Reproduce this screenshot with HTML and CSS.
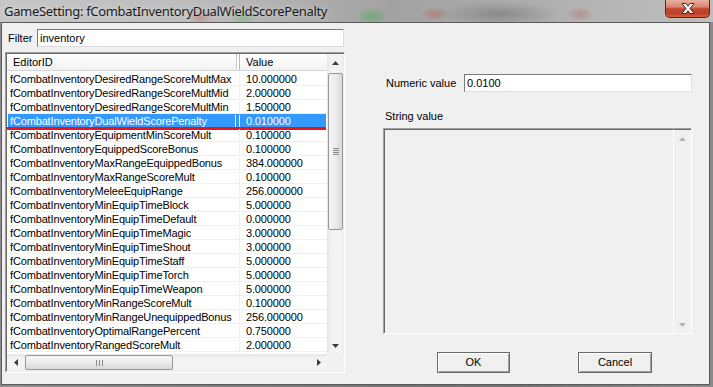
FILE: index.html
```html
<!DOCTYPE html>
<html>
<head>
<meta charset="utf-8">
<link rel="stylesheet" href="styles.css">
</head>
<body>
<div class="window">
  <div class="titlebar">
    <span class="title">GameSetting: fCombatInventoryDualWieldScorePenalty</span>
    <div class="close">
      <svg width="14" height="11" viewBox="0 0 14 11"><path d="M1 0.5 H4.8 L7 3.3 L9.2 0.5 H13 L9 5.5 L13 10.5 H9.2 L7 7.7 L4.8 10.5 H1 L5 5.5 Z" fill="#fff" stroke="#3a2a2a" stroke-width="1" stroke-linejoin="round"/></svg>
    </div>
  </div>
  <div class="frame">
    <div class="client">
      <div class="left-col">
        <div class="filter-row">
          <span class="lbl filter-lbl">Filter</span>
          <div class="textbox filter-box">inventory</div>
        </div>
        <div class="listview">
          <div class="lv-top">
            <div class="lv-content">
              <div class="lv-header">
                <div class="hcell hcell-id">EditorID</div>
                <div class="hcell hcell-val">Value</div>
              </div>
              <div class="lv-rows">
                <div class="row"><span class="c1">fCombatInventoryDesiredRangeScoreMultMax</span><span class="c2">10.000000</span></div>
                <div class="row"><span class="c1">fCombatInventoryDesiredRangeScoreMultMid</span><span class="c2">2.000000</span></div>
                <div class="row"><span class="c1">fCombatInventoryDesiredRangeScoreMultMin</span><span class="c2">1.500000</span></div>
                <div class="row selected"><span class="c1">fCombatInventoryDualWieldScorePenalty</span><span class="c2">0.010000</span><span class="redline"></span></div>
                <div class="row"><span class="c1">fCombatInventoryEquipmentMinScoreMult</span><span class="c2">0.100000</span></div>
                <div class="row"><span class="c1">fCombatInventoryEquippedScoreBonus</span><span class="c2">0.100000</span></div>
                <div class="row"><span class="c1">fCombatInventoryMaxRangeEquippedBonus</span><span class="c2">384.000000</span></div>
                <div class="row"><span class="c1">fCombatInventoryMaxRangeScoreMult</span><span class="c2">0.100000</span></div>
                <div class="row"><span class="c1">fCombatInventoryMeleeEquipRange</span><span class="c2">256.000000</span></div>
                <div class="row"><span class="c1">fCombatInventoryMinEquipTimeBlock</span><span class="c2">5.000000</span></div>
                <div class="row"><span class="c1">fCombatInventoryMinEquipTimeDefault</span><span class="c2">0.000000</span></div>
                <div class="row"><span class="c1">fCombatInventoryMinEquipTimeMagic</span><span class="c2">3.000000</span></div>
                <div class="row"><span class="c1">fCombatInventoryMinEquipTimeShout</span><span class="c2">3.000000</span></div>
                <div class="row"><span class="c1">fCombatInventoryMinEquipTimeStaff</span><span class="c2">5.000000</span></div>
                <div class="row"><span class="c1">fCombatInventoryMinEquipTimeTorch</span><span class="c2">5.000000</span></div>
                <div class="row"><span class="c1">fCombatInventoryMinEquipTimeWeapon</span><span class="c2">5.000000</span></div>
                <div class="row"><span class="c1">fCombatInventoryMinRangeScoreMult</span><span class="c2">0.100000</span></div>
                <div class="row"><span class="c1">fCombatInventoryMinRangeUnequippedBonus</span><span class="c2">256.000000</span></div>
                <div class="row"><span class="c1">fCombatInventoryOptimalRangePercent</span><span class="c2">0.750000</span></div>
                <div class="row"><span class="c1">fCombatInventoryRangedScoreMult</span><span class="c2">2.000000</span></div>
              </div>
            </div>
            <div class="vscroll">
              <div class="sb-btn"><svg width="7" height="4" viewBox="0 0 7 4"><path d="M0 4 L3.5 0 L7 4 Z" fill="#3c3c3c"/></svg></div>
              <div class="vtrack">
                <div class="vthumb">
                  <svg width="6" height="7" viewBox="0 0 6 7"><path d="M0 0.5 H6 M0 2.5 H6 M0 4.5 H6 M0 6.5 H6" stroke="#8a8a8a" stroke-width="1"/></svg>
                </div>
              </div>
              <div class="sb-btn"><svg width="7" height="4" viewBox="0 0 7 4"><path d="M0 0 L3.5 4 L7 0 Z" fill="#3c3c3c"/></svg></div>
            </div>
          </div>
          <div class="lv-bottom">
            <div class="hscroll">
              <div class="sb-hbtn"><svg width="4" height="7" viewBox="0 0 4 7"><path d="M4 0 L0 3.5 L4 7 Z" fill="#3c3c3c"/></svg></div>
              <div class="htrack">
                <div class="hthumb">
                  <svg width="7" height="6" viewBox="0 0 7 6"><path d="M0.5 0 V6 M3.5 0 V6 M6.5 0 V6" stroke="#8a8a8a" stroke-width="1"/></svg>
                </div>
              </div>
              <div class="sb-hbtn"><svg width="4" height="7" viewBox="0 0 4 7"><path d="M0 0 L4 3.5 L0 7 Z" fill="#3c3c3c"/></svg></div>
            </div>
            <div class="corner"></div>
          </div>
        </div>
      </div>
      <div class="right-col">
        <div class="num-row">
          <span class="lbl num-lbl">Numeric value</span>
          <div class="textbox num-box">0.0100</div>
        </div>
        <div class="lbl str-lbl">String value</div>
        <div class="memo">
          <div class="memo-body"></div>
          <div class="memo-scroll">
            <div class="sb-btn"><svg width="7" height="4" viewBox="0 0 7 4"><path d="M0 4 L3.5 0 L7 4 Z" fill="#b4b4b4"/></svg></div>
            <div class="memo-track"></div>
            <div class="sb-btn"><svg width="7" height="4" viewBox="0 0 7 4"><path d="M0 0 L3.5 4 L7 0 Z" fill="#b4b4b4"/></svg></div>
          </div>
        </div>
        <div class="btn-row">
          <div class="btn btn-ok">OK</div>
          <div class="btn btn-cancel">Cancel</div>
        </div>
      </div>
    </div>
  </div>
</div>
</body>
</html>
```

FILE: styles.css
```css
html, body {
  margin: 0;
  padding: 0;
}
body {
  width: 713px;
  height: 387px;
  overflow: hidden;
  background: #7d7d7d;
  font-family: "Liberation Sans", Arial, sans-serif;
  font-size: 11px;
  color: #000;
}
.window {
  display: flex;
  flex-direction: column;
  width: 713px;
  height: 387px;
  background: linear-gradient(90deg, #8c8c8c 0%, #7a7a7a 40%, #6f6f6f 70%, #8a8a8a 100%);
}
.titlebar {
  height: 22px;
  flex: none;
  display: flex;
  justify-content: space-between;
  align-items: flex-start;
  padding-left: 4px;
  background:
    radial-gradient(ellipse 14px 7px at 200px 17px, rgba(190, 60, 60, 0.35), transparent),
    radial-gradient(ellipse 14px 7px at 244px 17px, rgba(60, 170, 70, 0.35), transparent),
    radial-gradient(ellipse 16px 8px at 372px 16px, rgba(60, 170, 70, 0.5), transparent),
    radial-gradient(ellipse 14px 7px at 435px 14px, rgba(190, 60, 60, 0.35), transparent),
    radial-gradient(ellipse 14px 7px at 580px 14px, rgba(190, 60, 60, 0.3), transparent),
    radial-gradient(ellipse 60px 12px at 500px 14px, rgba(80, 80, 80, 0.35), transparent),
    linear-gradient(90deg, #c6c6c6 0%, #bdbdbd 25%, #b0b0b0 40%, #a2a2a2 55%, #a9a9a9 70%, #b6b6b6 85%, #bebebe 100%);
}
.title {
  font-family: "Noto Sans", "Open Sans", sans-serif;
  font-size: 13px;
  letter-spacing: -0.32px;
  line-height: 22px;
  color: #1c1c1c;
  text-shadow: 0 0 6px rgba(255, 255, 255, 0.7);
  white-space: nowrap;
}
.close {
  width: 45px;
  height: 18px;
  margin-right: 3px;
  box-sizing: border-box;
  border: 1px solid #5b2519;
  border-top: none;
  border-radius: 0 0 5px 5px;
  background: linear-gradient(180deg, #e9b0a0 0%, #d98a74 40%, #c4452c 52%, #c0402a 80%, #d2603f 100%);
  display: flex;
  align-items: center;
  justify-content: center;
}
.close svg {
  display: block;
}
.frame {
  flex: 1;
  display: flex;
  padding: 0 3px 2px 1px;
}
.client {
  flex: 1;
  display: flex;
  background: #f0f0f0;
  border: 1px solid #5a5a5a;
}
.lbl {
  white-space: nowrap;
}
.textbox {
  box-sizing: border-box;
  height: 18px;
  background: #fff;
  border: 1px solid;
  border-color: #7a7a7a #dcdcdc #dcdcdc #7a7a7a;
  padding: 2px 0 0 2px;
  line-height: 13px;
}
/* left column */
.left-col {
  width: 340px;
  margin-left: 3px;
  display: flex;
  flex-direction: column;
}
.filter-row {
  display: flex;
  align-items: center;
  margin-top: 6px;
  height: 18px;
}
.filter-lbl {
  width: 29px;
  padding-left: 3px;
}
.filter-box {
  flex: 1;
  margin-right: 1px;
}
.listview {
  margin-top: 5px;
  height: 321px;
  box-sizing: border-box;
  border: 1px solid;
  border-color: #a0a0a0 #ffffff #ffffff #a0a0a0;
  display: flex;
  flex-direction: column;
}
.lv-top {
  display: flex;
  height: 300px;
  border-top: 1px solid #696969;
  border-left: 1px solid #696969;
  background: #fff;
}
.lv-content {
  flex: 1;
  display: flex;
  flex-direction: column;
  overflow: hidden;
}
.lv-header {
  display: flex;
  height: 17px;
  flex: none;
  box-sizing: border-box;
  border-bottom: 1px solid #d5d5d5;
  background: linear-gradient(180deg, #ffffff 0%, #f7f7f7 60%, #f1f1f1 100%);
}
.hcell {
  box-sizing: border-box;
  padding: 2px 0 0 6px;
  line-height: 13px;
}
.hcell-id {
  width: 233px;
  border-right: 1px solid #b8b8b8;
  box-shadow: inset -2px 0 0 #fff, inset -3px 0 0 #c8c8c8;
}
.hcell-val {
  flex: 1;
}
.lv-rows {
  padding-top: 1px;
  flex: 1;
}
.row {
  position: relative;
  display: flex;
  height: 14px;
  box-sizing: border-box;
  border-bottom: 1px solid #f0f0f0;
  line-height: 13px;
  padding-top: 1px;
  white-space: nowrap;
}
.c1 {
  width: 233px;
  box-sizing: border-box;
  padding-left: 3px;
  border-right: 1px solid #f0f0f0;
  letter-spacing: -0.15px;
}
.c2 {
  flex: 1;
  padding-left: 6px;
  letter-spacing: -0.15px;
}
.row.selected {
  background: #3399ff;
  color: #fff;
  margin-left: 1px;
  margin-right: 1px;
}
.row.selected .c1 {
  width: 232px;
  padding-left: 2px;
  border-right: 1px solid #fff;
  box-shadow: inset -3px 0 0 #3399ff, inset -4px 0 0 #fff;
}
.redline {
  position: absolute;
  left: -1px;
  right: 0;
  bottom: -3px;
  height: 3px;
  background: #e8141e;
}
/* vertical scrollbar */
.vscroll {
  width: 17px;
  flex: none;
  display: flex;
  flex-direction: column;
  background: linear-gradient(90deg, #e6e6e6 0%, #f2f2f2 25%, #f4f4f4 75%, #ececec 100%);
}
.sb-btn {
  height: 17px;
  flex: none;
  display: flex;
  align-items: center;
  justify-content: center;
}
.sb-btn svg, .sb-hbtn svg {
  display: block;
}
.vtrack {
  flex: 1;
  padding-top: 2px;
}
.vthumb {
  height: 157px;
  margin: 0 0 0 1px;
  width: 15px;
  box-sizing: border-box;
  border: 1px solid #979797;
  border-radius: 2px;
  background: linear-gradient(90deg, #f5f5f5 0%, #ebebeb 50%, #d8d8d8 100%);
  display: flex;
  align-items: center;
  justify-content: center;
}
.lv-bottom {
  display: flex;
  height: 17px;
  border-left: 1px solid #696969;
}
.hscroll {
  flex: 1;
  display: flex;
  background: linear-gradient(180deg, #e6e6e6 0%, #f2f2f2 25%, #f4f4f4 75%, #ececec 100%);
}
.sb-hbtn {
  width: 17px;
  flex: none;
  display: flex;
  align-items: center;
  justify-content: center;
}
.htrack {
  flex: 1;
  padding-left: 1px;
  padding-top: 1px;
}
.hthumb {
  width: 148px;
  height: 15px;
  box-sizing: border-box;
  border: 1px solid #979797;
  border-radius: 2px;
  background: linear-gradient(180deg, #f5f5f5 0%, #ebebeb 50%, #d8d8d8 100%);
  display: flex;
  align-items: center;
  justify-content: center;
}
.corner {
  width: 17px;
  background: #f0f0f0;
}
/* right column */
.right-col {
  width: 309px;
  margin-left: 38px;
  display: flex;
  flex-direction: column;
}
.num-row {
  display: flex;
  align-items: center;
  margin-top: 51px;
  height: 18px;
}
.num-lbl {
  width: 78px;
  padding-left: 3px;
}
.num-box {
  flex: 1;
}
.str-lbl {
  margin-top: 18px;
  padding-left: 2px;
  line-height: 13px;
  height: 13px;
}
.memo {
  margin-top: 5px;
  height: 206px;
  box-sizing: border-box;
  border: 1px solid;
  border-color: #a0a0a0 #ffffff #ffffff #a0a0a0;
  display: flex;
}
.memo-body {
  flex: 1;
  border-top: 1px solid #696969;
  border-left: 1px solid #696969;
  background: #f0f0f0;
}
.memo-scroll {
  width: 17px;
  display: flex;
  flex-direction: column;
  border-top: 1px solid #696969;
  border-left: 1px solid #fbfbfb;
  background: #f0f0f0;
}
.memo-track {
  flex: 1;
}
.btn-row {
  display: flex;
  margin-top: 18px;
  height: 21px;
}
.btn {
  box-sizing: border-box;
  height: 21px;
  border: 1px solid #6a6a6a;
  box-shadow: inset 1px 1px 0 #ffffff, inset -1px -1px 0 #a0a0a0;
  background: #f0f0f0;
  display: flex;
  align-items: center;
  justify-content: center;
  line-height: 13px;
}
.btn-ok {
  width: 73px;
  margin-left: 54px;
}
.btn-cancel {
  width: 74px;
  margin-left: 68px;
}
```
